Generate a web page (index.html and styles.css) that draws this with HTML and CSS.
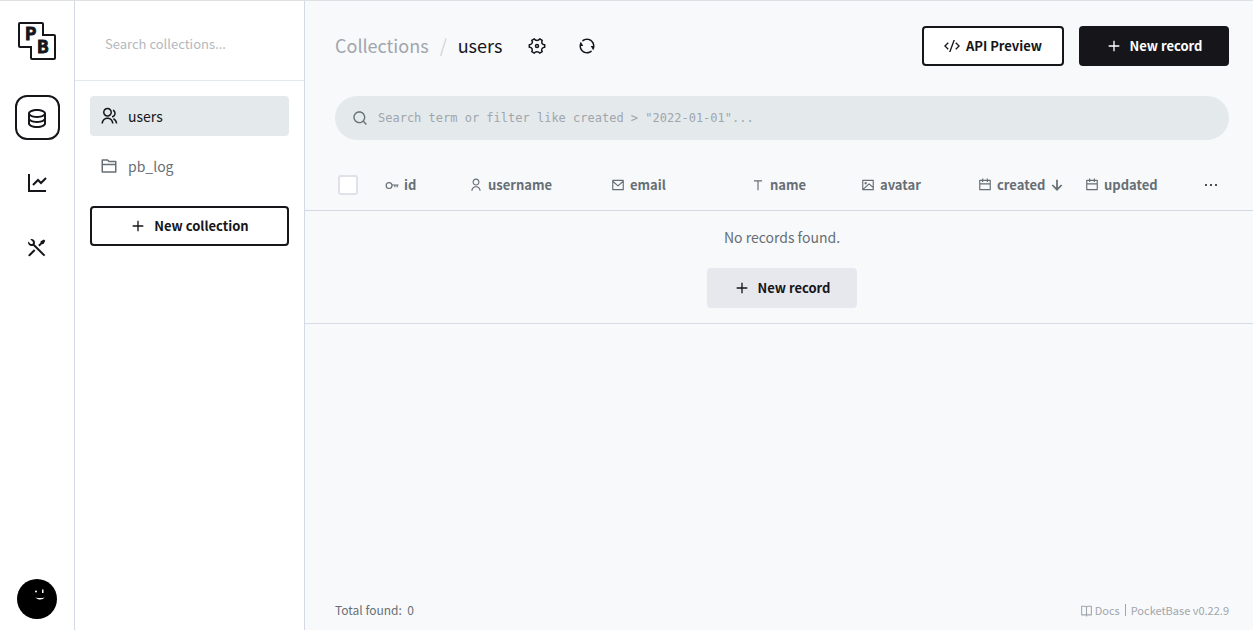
FILE: index.html
```
<!DOCTYPE html>
<html lang="en">
<head>
<meta charset="utf-8">
<title>users - PocketBase</title>
<link rel="stylesheet" href="styles.css">
</head>
<body>
<svg class="sprite" aria-hidden="true">
  <symbol id="i-database" viewBox="0 0 24 24"><path d="M5 12.5C5 12.8134 5.46101 13.3584 6.53047 13.8931C7.91405 14.5849 9.87677 15 12 15C14.1232 15 16.0859 14.5849 17.4695 13.8931C18.539 13.3584 19 12.8134 19 12.5V10.3287C17.35 11.3482 14.8273 12 12 12C9.17273 12 6.64996 11.3482 5 10.3287V12.5ZM19 15.3287C17.35 16.3482 14.8273 17 12 17C9.17273 17 6.64996 16.3482 5 15.3287V17.5C5 17.8134 5.46101 18.3584 6.53047 18.8931C7.91405 19.5849 9.87677 20 12 20C14.1232 20 16.0859 19.5849 17.4695 18.8931C18.539 18.3584 19 17.8134 19 17.5V15.3287ZM3 17.5V7.5C3 5.01472 7.02944 3 12 3C16.9706 3 21 5.01472 21 7.5V17.5C21 19.9853 16.9706 22 12 22C7.02944 22 3 19.9853 3 17.5ZM12 10C14.1232 10 16.0859 9.58492 17.4695 8.89313C18.539 8.3584 19 7.81342 19 7.5C19 7.18658 18.539 6.6416 17.4695 6.10687C16.0859 5.41508 14.1232 5 12 5C9.87677 5 7.91405 5.41508 6.53047 6.10687C5.46101 6.6416 5 7.18658 5 7.5C5 7.81342 5.46101 8.3584 6.53047 8.89313C7.91405 9.58492 9.87677 10 12 10Z"/></symbol>
  <symbol id="i-chart" viewBox="0 0 24 24"><path d="M5 3V19H21V21H3V3H5ZM20.2929 6.29289L21.7071 7.70711L16 13.4142L13 10.415L8.70711 14.7071L7.29289 13.2929L13 7.58579L16 10.585L20.2929 6.29289Z"/></symbol>
  <symbol id="i-tools" viewBox="0 0 24 24"><path d="M5.32943 3.27158C6.56252 2.8332 7.9923 3.10749 8.97927 4.09446C10.1002 5.21537 10.3019 6.90741 9.5843 8.23385L20.293 18.9437L18.8788 20.3579L8.16982 9.64875C6.84325 10.3669 5.15069 10.1654 4.02952 9.04421C3.04227 8.05696 2.7681 6.62665 3.20701 5.39332L5.44373 7.63C6.02952 8.21578 6.97927 8.21578 7.56505 7.63C8.15084 7.04421 8.15084 6.09446 7.56505 5.50868L5.32943 3.27158ZM15.6968 5.15512L18.8788 3.38736L20.293 4.80157L18.5252 7.98355L16.7574 8.3371L14.6361 10.4584L13.2219 9.04421L15.3432 6.92289L15.6968 5.15512ZM8.97927 13.2868L10.3935 14.7011L5.09018 20.0044C4.69966 20.3949 4.06649 20.3949 3.67597 20.0044C3.31334 19.6417 3.28744 19.0699 3.59826 18.6774L3.67597 18.5902L8.97927 13.2868Z"/></symbol>
  <symbol id="i-group" viewBox="0 0 24 24"><path d="M2 22C2 17.5817 5.58172 14 10 14C14.4183 14 18 17.5817 18 22H16C16 18.6863 13.3137 16 10 16C6.68629 16 4 18.6863 4 22H2ZM10 13C6.685 13 4 10.315 4 7C4 3.685 6.685 1 10 1C13.315 1 16 3.685 16 7C16 10.315 13.315 13 10 13ZM10 11C12.21 11 14 9.21 14 7C14 4.79 12.21 3 10 3C7.79 3 6 4.79 6 7C6 9.21 7.79 11 10 11ZM18.2837 14.7028C21.0644 15.9561 23 18.752 23 22H21C21 19.564 19.5483 17.4671 17.4628 16.5271L18.2837 14.7028ZM17.5962 3.41321C19.5944 4.23703 21 6.20361 21 8.5C21 11.3702 18.8042 13.7252 16 13.9776V11.9646C17.6967 11.7222 19 10.264 19 8.5C19 7.11935 18.2016 5.92603 17.041 5.35635L17.5962 3.41321Z"/></symbol>
  <symbol id="i-folder" viewBox="0 0 24 24"><path d="M12.4142 5H21C21.5523 5 22 5.44772 22 6V20C22 20.5523 21.5523 21 21 21H3C2.44772 21 2 20.5523 2 20V4C2 3.44772 2.44772 3 3 3H10.4142L12.4142 5ZM4 11V19H20V11H4ZM4 9H20V7H11.5858L9.58579 5H4V9Z"/></symbol>
  <symbol id="i-plus" viewBox="0 0 24 24"><path d="M11 11V4H13V11H20V13H13V20H11V13H4V11Z"/></symbol>
  <symbol id="i-settings" viewBox="0 0 24 24"><path fill="none" stroke="currentColor" stroke-width="2" stroke-linejoin="round" d="M8.300 2.500Q9.500 4.500 12 4.500T15.700 2.500L19 4.400Q17.700 6.500 18.700 8.500T22.300 10.300V13.700Q20 13.700 18.700 15.500T19 19.600L15.700 21.500Q14.500 19.500 12 19.500T8.300 21.500L5 19.600Q6.300 17.500 5.300 15.500T1.700 13.700V10.300Q4 10.300 5.300 8.500T5 4.400Z"/><circle cx="12" cy="12" r="2" fill="none" stroke="currentColor" stroke-width="2"/></symbol>
  <symbol id="i-refresh" viewBox="0 0 24 24"><path d="M5.46257 4.43262C7.21556 2.91688 9.5007 2 12 2C17.5228 2 22 6.47715 22 12C22 14.1361 21.3302 16.1158 20.1892 17.7406L17 12H20C20 7.58172 16.4183 4 12 4C9.84982 4 7.89777 4.84827 6.46023 6.22842L5.46257 4.43262ZM18.5374 19.5674C16.7844 21.0831 14.4993 22 12 22C6.47715 22 2 17.5228 2 12C2 9.86386 2.66979 7.88416 3.8108 6.25944L7 12H4C4 16.4183 7.58172 20 12 20C14.1502 20 16.1022 19.1517 17.5398 17.7716L18.5374 19.5674Z"/></symbol>
  <symbol id="i-code" viewBox="0 0 24 24"><path d="M24 12L18.3431 17.6569L16.9289 16.2426L21.1716 12L16.9289 7.75736L18.3431 6.34315L24 12ZM2.82843 12L7.07107 16.2426L5.65685 17.6569L0 12L5.65685 6.34315L7.07107 7.75736L2.82843 12ZM9.78845 21H7.66009L14.2116 3H16.3399L9.78845 21Z"/></symbol>
  <symbol id="i-search" viewBox="0 0 24 24"><path d="M18.031 16.6168L22.3137 20.8995L20.8995 22.3137L16.6168 18.031C15.0769 19.263 13.124 20 11 20C6.032 20 2 15.968 2 11C2 6.032 6.032 2 11 2C15.968 2 20 6.032 20 11C20 13.124 19.263 15.0769 18.031 16.6168ZM16.0247 15.8748C17.2475 14.6146 18 12.8956 18 11C18 7.1325 14.8675 4 11 4C7.1325 4 4 7.1325 4 11C4 14.8675 7.1325 18 11 18C12.8956 18 14.6146 17.2475 15.8748 16.0247L16.0247 15.8748Z"/></symbol>
  <symbol id="i-key" viewBox="0 0 24 24"><path fill="none" stroke="currentColor" stroke-width="2" d="M12 12H23M17 12V16M21 12V16"/><circle cx="7" cy="13" r="5" fill="none" stroke="currentColor" stroke-width="2"/></symbol>
  <symbol id="i-user" viewBox="0 0 24 24"><path d="M4 22C4 17.5817 7.58172 14 12 14C16.4183 14 20 17.5817 20 22H18C18 18.6863 15.3137 16 12 16C8.68629 16 6 18.6863 6 22H4ZM12 13C8.685 13 6 10.315 6 7C6 3.685 8.685 1 12 1C15.315 1 18 3.685 18 7C18 10.315 15.315 13 12 13ZM12 11C14.21 11 16 9.21 16 7C16 4.79 14.21 3 12 3C9.79 3 8 4.79 8 7C8 9.21 9.79 11 12 11Z"/></symbol>
  <symbol id="i-mail" viewBox="0 0 24 24"><path fill="none" stroke="currentColor" stroke-width="2" stroke-linejoin="round" d="M3 4H21V20H3ZM3.5 6L12 13.5L20.5 6"/></symbol>
  <symbol id="i-text" viewBox="0 0 24 24"><path d="M13 6V21H11V6H5V4H19V6Z"/></symbol>
  <symbol id="i-image" viewBox="0 0 24 24"><path fill="none" stroke="currentColor" stroke-width="2" stroke-linejoin="round" d="M3 4H21V20H3ZM4 19L14 10L21 16.5"/><circle cx="8" cy="9" r="2"/></symbol>
  <symbol id="i-calendar" viewBox="0 0 24 24"><path fill="none" stroke="currentColor" stroke-width="2" stroke-linejoin="round" d="M3 4H21V20H3ZM3 10H21M8 1V7M16 1V7"/></symbol>
  <symbol id="i-down" viewBox="0 0 24 24"><path fill="none" stroke="currentColor" stroke-width="3" d="M12 3V20M4 12L12 20L20 12"/></symbol>
  <symbol id="i-more" viewBox="0 0 24 24"><circle cx="4.5" cy="12" r="1.5"/><circle cx="12" cy="12" r="1.5"/><circle cx="19.5" cy="12" r="1.5"/></symbol>
  <symbol id="i-book" viewBox="0 0 24 24"><path fill="none" stroke="currentColor" stroke-width="2" stroke-linejoin="round" d="M3 4H9.5Q12 4 12 6.5Q12 4 14.5 4H21V20H3ZM12 6V23"/></symbol>
</svg>

<div class="app">
  <nav class="rail" aria-label="Main">
    <a class="logo" href="#" aria-label="PocketBase">
      <svg viewBox="0 0 40 40" width="40" height="40"><path d="M3 2H25Q26 2 26 3V14H37Q38 14 38 15V37Q38 38 37 38H15Q14 38 14 37V26H3Q2 26 2 25V3Q2 2 3 2Z" class="logo-line"/><text x="8" y="19" class="logo-letter">P</text><text x="20" y="32" class="logo-letter">B</text></svg>
    </a>
    <div class="rail-links">
      <a class="rail-link active" href="#" aria-label="Collections"><svg class="ico lg"><use href="#i-database"/></svg></a>
      <a class="rail-link" href="#" aria-label="Logs"><svg class="ico lg"><use href="#i-chart"/></svg></a>
      <a class="rail-link" href="#" aria-label="Settings"><svg class="ico lg"><use href="#i-tools"/></svg></a>
    </div>
    <button class="avatar" type="button" aria-label="Account">
      <svg viewBox="0 0 40 40" width="40" height="40"><circle cx="20" cy="20" r="20"/><g fill="#fff"><circle cx="19" cy="12.500" r="1"/><rect x="25" y="10.500" width="1.500" height="3.500"/><path d="M18.500 18.500Q23 19.500 27.500 18.500Q26 21 22 20.500Q20 20 18.500 18.500Z"/></g></svg>
    </button>
  </nav>

  <aside class="sidebar">
    <header class="sidebar-head">
      <input class="side-search" type="text" placeholder="Search collections..." aria-label="Search collections">
    </header>
    <div class="sidebar-body">
      <a class="side-item active" href="#"><svg class="ico md"><use href="#i-group"/></svg>users</a>
      <a class="side-item" href="#"><svg class="ico md"><use href="#i-folder"/></svg>pb_log</a>
      <button class="btn outline block" type="button"><svg class="ico"><use href="#i-plus"/></svg>New collection</button>
    </div>
  </aside>

  <main class="page">
    <header class="page-head">
      <div class="crumbs"><a class="crumb" href="#">Collections</a><span class="slash">/</span><span>users</span></div>
      <div class="tools">
        <button class="icon-btn" type="button" aria-label="Edit collection"><svg class="ico md"><use href="#i-settings"/></svg></button>
        <button class="icon-btn" type="button" aria-label="Refresh"><svg class="ico md"><use href="#i-refresh"/></svg></button>
      </div>
      <div class="actions">
        <button class="btn outline code" type="button"><svg class="ico"><use href="#i-code"/></svg>API Preview</button>
        <button class="btn solid wide" type="button"><svg class="ico"><use href="#i-plus"/></svg>New record</button>
      </div>
    </header>
    <label class="filter">
      <svg class="ico"><use href="#i-search"/></svg>
      <input class="filter-input" type="text" aria-label="Search term or filter" placeholder="Search term or filter like created &gt; &quot;2022-01-01&quot;...">
    </label>
    <table class="records">
      <colgroup><col class="c-check"><col class="c-id"><col class="c-username"><col class="c-email"><col class="c-name"><col class="c-avatar"><col class="c-created"><col class="c-updated"><col class="c-more"></colgroup>
      <thead>
        <tr>
          <th class="check-cell"><input class="check" type="checkbox" aria-label="Select all"></th>
          <th><span class="col-label"><svg class="ico sm"><use href="#i-key"/></svg>id</span></th>
          <th><span class="col-label"><svg class="ico sm"><use href="#i-user"/></svg>username</span></th>
          <th><span class="col-label"><svg class="ico sm"><use href="#i-mail"/></svg>email</span></th>
          <th><span class="col-label"><svg class="ico sm"><use href="#i-text"/></svg>name</span></th>
          <th><span class="col-label"><svg class="ico sm"><use href="#i-image"/></svg>avatar</span></th>
          <th><span class="col-label"><svg class="ico sm"><use href="#i-calendar"/></svg>created<svg class="ico sm"><use href="#i-down"/></svg></span></th>
          <th><span class="col-label"><svg class="ico sm"><use href="#i-calendar"/></svg>updated</span></th>
          <th class="more-cell"><button class="more" type="button" aria-label="Toggle columns"><svg class="ico"><use href="#i-more"/></svg></button></th>
        </tr>
      </thead>
      <tbody>
        <tr><td class="empty" colspan="9"><p class="empty-text">No records found.</p><button class="btn soft wide" type="button"><svg class="ico"><use href="#i-plus"/></svg>New record</button></td></tr>
      </tbody>
    </table>
    <footer class="page-foot">
      <span>Total found: &nbsp;0</span>
      <div class="credits"><a class="credit" href="#"><svg class="ico xs"><use href="#i-book"/></svg>Docs</a><span class="bar"></span><a class="credit" href="#">PocketBase v0.22.9</a></div>
    </footer>
  </main>
</div>
</body>
</html>
```
FILE: styles.css
```
* { box-sizing: border-box; }
body {
  margin: 0;
  color: #16161a;
  background: #f8f9fb;
  font: 14px/20px "Noto Sans CJK SC", "Open Sans", sans-serif;
}
a { color: inherit; text-decoration: none; }
button, input { font: inherit; color: inherit; }
button { cursor: pointer; border: 0; background: none; padding: 0; }
.sprite { display: none; }
.ico { width: 16px; height: 16px; fill: currentColor; flex: none; }
.ico.lg { width: 24px; height: 24px; }
.ico.md { width: 18px; height: 18px; }
.ico.sm { width: 14px; height: 14px; }
.ico.xs { width: 13px; height: 13px; }

.app {
  display: flex;
  min-height: 100vh;
  border-top: 1px solid #dee1e4;
}

.rail {
  display: flex;
  flex-direction: column;
  align-items: center;
  width: 75px;
  padding: 20px 0 11px;
  background: #fff;
  border-right: 1px solid #d3dae6;
}
.logo, .avatar { display: flex; }
.logo-line { fill: none; stroke: #16161a; stroke-width: 2; }
.logo-letter { font: 700 17px "Noto Sans CJK SC", sans-serif; fill: #16161a; stroke: #16161a; stroke-width: 1; }
.rail-links { display: flex; flex-direction: column; gap: 20px; margin-top: 34px; }
.rail-link {
  display: flex;
  align-items: center;
  justify-content: center;
  width: 45px;
  height: 45px;
  border: 2px solid transparent;
  border-radius: 12px;
}
.rail-link.active { border-color: #16161a; }
.avatar { margin-top: auto; border-radius: 50%; }

.sidebar {
  width: 230px;
  flex: none;
  background: #fff;
  border-right: 1px solid #d3dae6;
}
.sidebar-head {
  height: 80px;
  padding: 22px 15px 0 30px;
  border-bottom: 1px solid #e3e8ec;
}
.side-search {
  width: 100%;
  height: 40px;
  padding: 0;
  border: 0;
  outline: 0;
  background: none;
  font-size: 13px;
}
.side-search::placeholder { color: #b3b8bd; opacity: 1; }
.sidebar-body { display: flex; flex-direction: column; gap: 10px; padding: 15px; }
.side-item {
  display: flex;
  align-items: center;
  gap: 10px;
  height: 40px;
  padding: 0 10px;
  border-radius: 4px;
  color: #666f75;
}
.side-item.active { background: #e4e9ec; color: #16161a; }

.btn {
  display: inline-flex;
  align-items: center;
  justify-content: center;
  gap: 8px;
  height: 40px;
  padding: 0 20px;
  border-radius: 4px;
  font-size: 13px;
  font-weight: 700;
}
.btn.outline { border: 2px solid #16161a; background: #fff; }
.btn.solid { background: #16161a; color: #fff; }
.btn.soft { background: #e7e8ee; }
.btn.wide { min-width: 150px; }
.btn.code { gap: 6px; }
.btn.block { width: 100%; margin-top: 10px; }

.page { display: flex; flex-direction: column; flex: 1; min-width: 0; }
.page-head { display: flex; align-items: center; padding: 25px 24px 0 30px; }
.crumbs { display: flex; gap: 11px; font-size: 18px; line-height: 38px; padding-bottom: 2px; }
.crumb { color: #a0a6ac; }
.slash { color: #d0d4d8; }
.tools { display: flex; gap: 10px; margin-left: 15px; }
.icon-btn {
  display: flex;
  align-items: center;
  justify-content: center;
  width: 40px;
  height: 40px;
}
.actions { display: flex; gap: 15px; margin-left: auto; }

.filter {
  display: flex;
  align-items: center;
  gap: 10px;
  height: 44px;
  margin: 30px 24px 20px 30px;
  padding: 0 17px;
  border-radius: 22px;
  background: #e4e9ec;
  color: #666f75;
}
.filter-input {
  flex: 1;
  min-width: 0;
  padding: 0;
  border: 0;
  outline: 0;
  background: none;
  font: 12px/20px "DejaVu Sans Mono", monospace;
}
.filter-input::placeholder { color: #a0a6ac; opacity: 1; }

.records { width: 100%; border-collapse: collapse; table-layout: fixed; }
.c-check { width: 69px; }
.c-id { width: 84px; }
.c-username { width: 142px; }
.c-email { width: 140px; }
.c-name { width: 110px; }
.c-avatar { width: 117px; }
.c-created { width: 107px; }
.c-updated { width: 110px; }
.c-more { width: 69px; }
.records th {
  height: 50px;
  padding: 0 0 0 11px;
  border-bottom: 1px solid #d1dae4;
  color: #666f75;
  font-size: 13px;
  text-align: left;
}
.records .check-cell { padding-left: 33px; }
.records .more-cell { padding-left: 19px; }
.col-label { display: flex; align-items: center; gap: 5px; }
.check {
  display: block;
  appearance: none;
  width: 20px;
  height: 20px;
  margin: 0;
  border: 2px solid #e0e1e9;
  border-radius: 3px;
  background: #fff;
}
.more { display: flex; color: #16161a; }
.records .empty {
  padding: 16px 24px 15px 30px;
  border-bottom: 1px solid #d7dde4;
  text-align: center;
}
.empty-text { margin: 0 0 21px; color: #666f75; }
.empty .btn { display: flex; margin: 0 auto; }

.page-foot {
  display: flex;
  align-items: center;
  justify-content: space-between;
  margin-top: auto;
  padding: 0 24px 10px 30px;
  color: #666f75;
  font-size: 12px;
}
.credits { display: flex; align-items: center; gap: 5px; color: #a0a6ac; font-size: 11px; }
.credit { display: flex; align-items: center; gap: 2px; }
.bar { width: 1px; height: 12px; background: #a0a6ac; }
```
